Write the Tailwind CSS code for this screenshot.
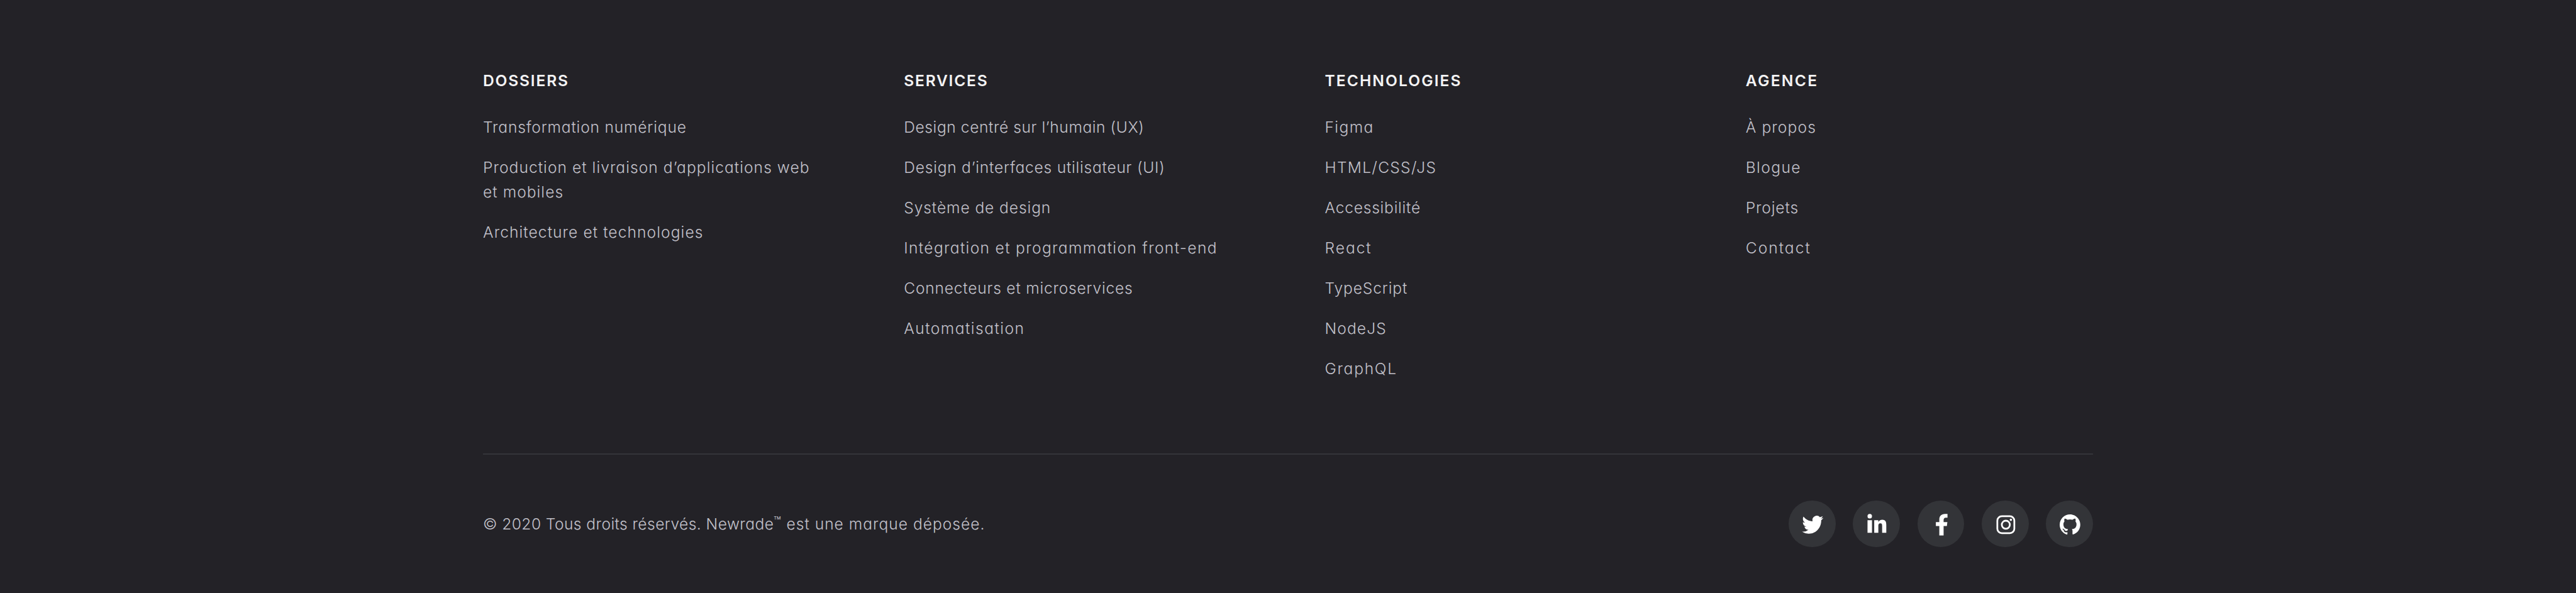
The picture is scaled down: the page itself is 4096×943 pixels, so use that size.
<!DOCTYPE html>
<html lang="fr">
<head>
<meta charset="utf-8">
<title>Newrade</title>
<script src="https://cdn.jsdelivr.net/npm/@tailwindcss/browser@4"></script>
</head>
<body class="bg-[#232227]">
<footer class="flex h-[943px] w-full flex-col items-center overflow-hidden bg-[#232227] pt-[108.5px] font-['Inter',sans-serif] text-[24.6px] leading-[38.4px] font-light text-[#c2c1ca] [font-feature-settings:'cv11']">
  <div class="flex w-[2560px] flex-col">
    <nav class="grid h-[612.5px] grid-cols-4 content-start gap-x-[117px] whitespace-nowrap">
      <section>
        <h2 class="mb-[36.3px] font-semibold tracking-[1.8px] text-[#f3f3f4]">DOSSIERS</h2>
        <ul class="flex flex-col gap-[25.6px]">
          <li class="tracking-[0.8px]">Transformation numérique</li>
          <li class="tracking-[1.04px]">Production et livraison d’applications web<br>et mobiles</li>
          <li class="tracking-[1.07px]">Architecture et technologies</li>
        </ul>
      </section>
      <section>
        <h2 class="mb-[36.3px] font-semibold tracking-[1.75px] text-[#f3f3f4]">SERVICES</h2>
        <ul class="flex flex-col gap-[25.6px]">
          <li class="tracking-[0.57px]">Design centré sur l’humain (UX)</li>
          <li class="tracking-[0.75px]">Design d’interfaces utilisateur (UI)</li>
          <li class="tracking-[0.9px]">Système de design</li>
          <li class="tracking-[1.33px]">Intégration et programmation front-end</li>
          <li class="tracking-[0.78px]">Connecteurs et microservices</li>
          <li class="tracking-[1.46px]">Automatisation</li>
        </ul>
      </section>
      <section>
        <h2 class="mb-[36.3px] font-semibold tracking-[2.05px] text-[#f3f3f4]">TECHNOLOGIES</h2>
        <ul class="flex flex-col gap-[25.6px]">
          <li class="tracking-[1.395px]">Figma</li>
          <li class="tracking-[1.25px]">HTML/CSS/JS</li>
          <li class="tracking-[0.75px]">Accessibilité</li>
          <li class="tracking-[1.936px]">React</li>
          <li class="tracking-[0.85px]">TypeScript</li>
          <li class="tracking-[1.1px]">NodeJS</li>
          <li class="tracking-[1.7px]">GraphQL</li>
        </ul>
      </section>
      <section>
        <h2 class="mb-[36.3px] font-semibold tracking-[2.28px] text-[#f3f3f4]">AGENCE</h2>
        <ul class="flex flex-col gap-[25.6px]">
          <li class="tracking-[1.1px]">À propos</li>
          <li class="tracking-[1.4px]">Blogue</li>
          <li class="tracking-[0.85px]">Projets</li>
          <li class="tracking-[2px]">Contact</li>
        </ul>
      </section>
    </nav>
    <div class="h-[2px] bg-[#343439]"></div>
    <div class="mt-[72.7px] flex items-center justify-between">
      <p class="flex pt-px whitespace-nowrap"><span class="w-[462px] tracking-[0.42px]">© 2020 Tous droits réservés. Newrade</span><span class="w-[20.5px] -translate-y-[3.6px] text-[19.7px]">™</span><span class="tracking-[0.995px]">est une marque déposée.</span></p>
      <div class="flex gap-[27.73px] text-white">
        <a class="size-[74.67px] rounded-full bg-[#333438]"><svg viewBox="0 0 105 105" fill="currentColor" class="size-full"><path transform="translate(30 29.3) scale(1.99 2.06)" d="M23.953 4.57a10 10 0 01-2.825.775 4.958 4.958 0 002.163-2.723c-.951.555-2.005.959-3.127 1.184a4.92 4.92 0 00-8.384 4.482C7.69 8.095 4.067 6.13 1.64 3.162a4.822 4.822 0 00-.666 2.475c0 1.71.87 3.213 2.188 4.096a4.904 4.904 0 01-2.228-.616v.06a4.923 4.923 0 003.946 4.827 4.996 4.996 0 01-2.212.085 4.936 4.936 0 004.604 3.417 9.867 9.867 0 01-6.102 2.105c-.39 0-.779-.023-1.17-.067a13.995 13.995 0 007.557 2.209c9.053 0 13.998-7.496 13.998-13.985 0-.21 0-.42-.015-.63A9.935 9.935 0 0024 4.59z"/></svg></a>
        <a class="size-[74.67px] rounded-full bg-[#333438]"><svg viewBox="0 0 105 105" fill="currentColor" class="size-full"><circle cx="38" cy="35" r="5"/><path d="M33 44h10v28H33zM48 44h9.2v3.9h.1c1.3-2.4 4.4-4.9 9-4.9 7.4 0 8.7 5 8.7 12V72h-9.3V57.3c0-3.3-.1-6.3-4-6.3-3.9 0-4.5 3-4.5 6V72H48z"/></svg></a>
        <a class="size-[74.67px] rounded-full bg-[#333438]"><svg viewBox="0 0 105 105" fill="currentColor" class="size-full"><path d="M58.3 78V57h7.3l1.1-8.7h-8.4v-4.5c0-3.2 1.2-5.6 4.9-5.6H67V30h-5.3C53 30 48.7 35 48.7 42.3v6H41V57h7.7v21z"/></svg></a>
        <a class="size-[74.67px] rounded-full bg-[#333438]"><svg viewBox="0 0 105 105" fill="none" stroke="currentColor" stroke-width="3.9" class="size-full"><rect x="35" y="35" width="38" height="38" rx="10"/><circle cx="54" cy="54" r="9"/><circle cx="65.3" cy="43" r="2.6" fill="currentColor" stroke="none"/></svg></a>
        <a class="size-[74.67px] rounded-full bg-[#333438]"><svg viewBox="0 0 105 105" fill="currentColor" class="size-full"><path transform="translate(31 30.4) scale(1.917)" d="M12 .297c-6.63 0-12 5.373-12 12 0 5.303 3.438 9.8 8.205 11.385.6.113.82-.258.82-.577 0-.285-.01-1.04-.015-2.04-3.338.724-4.042-1.61-4.042-1.61C4.422 18.07 3.633 17.7 3.633 17.7c-1.087-.744.084-.729.084-.729 1.205.084 1.838 1.236 1.838 1.236 1.07 1.835 2.809 1.305 3.495.998.108-.776.417-1.305.76-1.605-2.665-.3-5.466-1.332-5.466-5.93 0-1.31.465-2.38 1.235-3.22-.135-.303-.54-1.523.105-3.176 0 0 1.005-.322 3.3 1.23.96-.267 1.98-.399 3-.405 1.02.006 2.04.138 3 .405 2.28-1.552 3.285-1.23 3.285-1.23.645 1.653.24 2.873.12 3.176.765.84 1.23 1.91 1.23 3.22 0 4.61-2.805 5.625-5.475 5.92.42.36.81 1.096.81 2.22 0 1.606-.015 2.896-.015 3.286 0 .315.21.69.825.57C20.565 22.092 24 17.592 24 12.297c0-6.627-5.373-12-12-12"/></svg></a>
      </div>
    </div>
  </div>
</footer>
</body>
</html>
